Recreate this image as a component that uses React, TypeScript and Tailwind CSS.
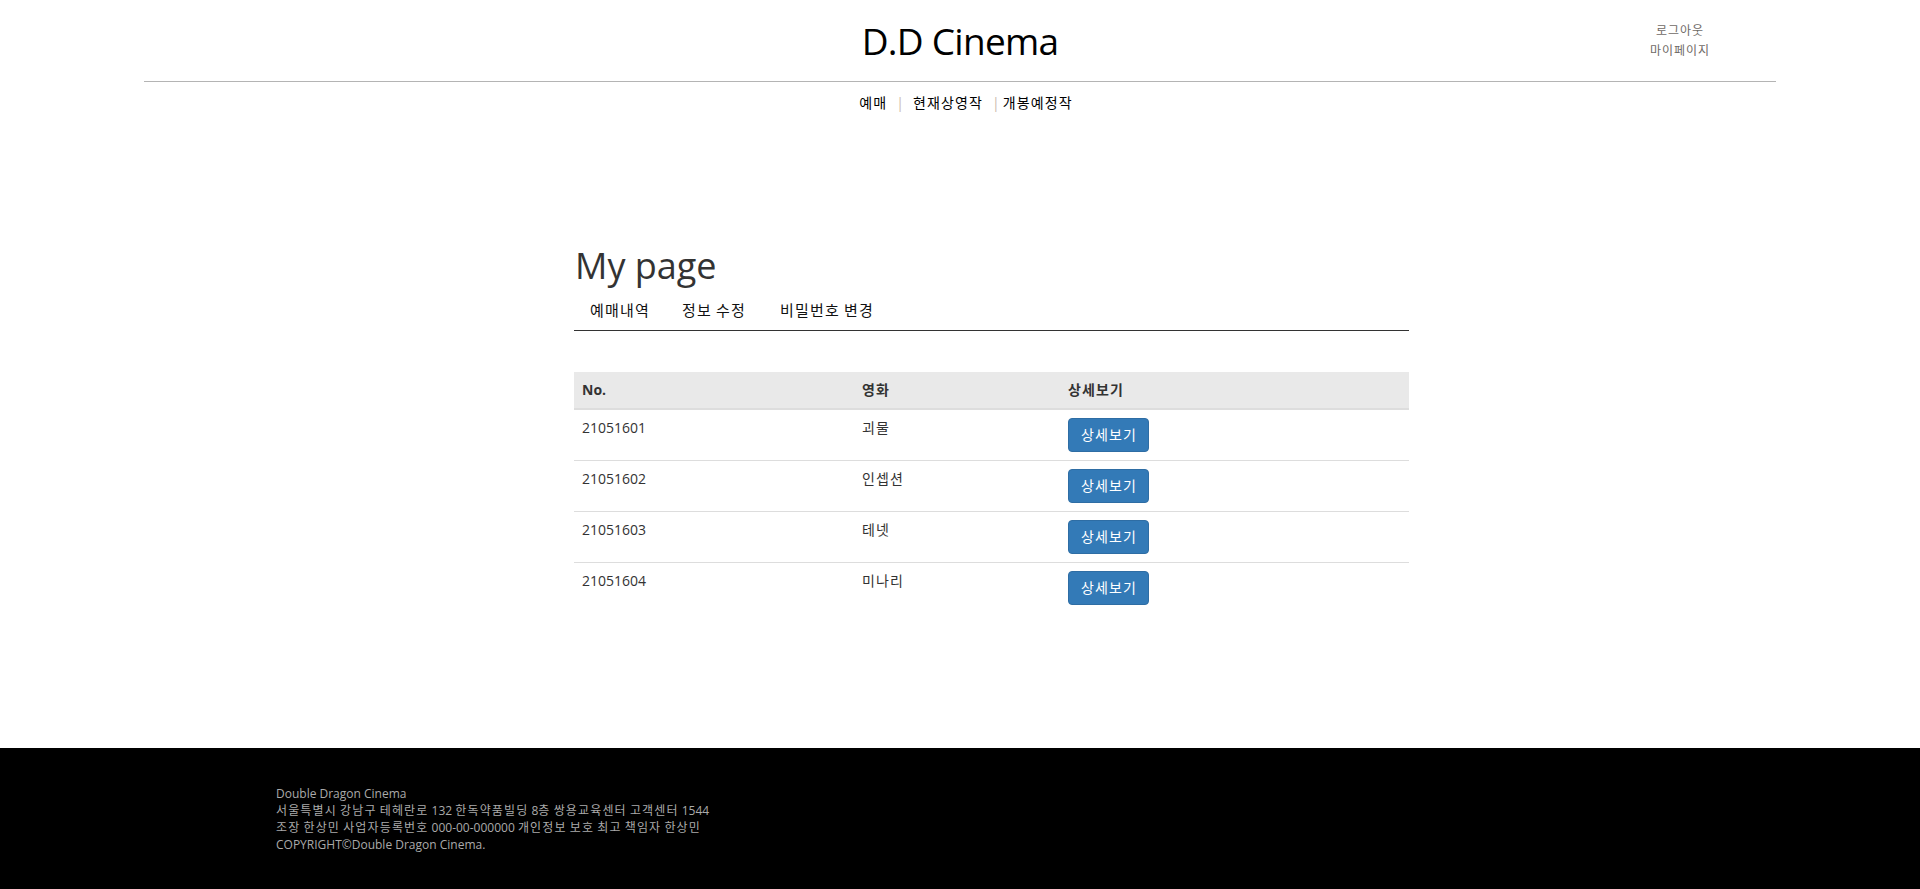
import React from "react";

const rows = [
  { no: "21051601", title: "괴물" },
  { no: "21051602", title: "인셉션" },
  { no: "21051603", title: "테넷" },
  { no: "21051604", title: "미나리" },
];

function K({ children, wide }: { children: string; wide?: boolean }) {
  const parts = children.split(/([\uAC00-\uD7A3]+)/);
  return (
    <>
      {parts.map((p, i) =>
        /[\uAC00-\uD7A3]/.test(p) ? (
          <span key={i} className={wide ? "tracking-[0.095em]" : "tracking-[0.08em]"}>
            {p}
          </span>
        ) : (
          <React.Fragment key={i}>{p}</React.Fragment>
        )
      )}
    </>
  );
}

export default function App() {
  return (
    <div
      className="min-h-screen flex flex-col bg-white text-[#333]"
      style={{ fontFamily: '"Open Sans", "Noto Sans CJK KR", sans-serif' }}
    >
      {/* Header */}
      <header className="grid grid-cols-[1fr_auto_1fr] h-[81px]">
        <div />
        <h1 className="text-[37px] leading-[44px] tracking-[-0.02em] text-black font-normal pt-[19px]">D.D Cinema</h1>
        <div className="flex justify-end pr-[210px] pt-[21px]">
          <div className="flex flex-col items-center text-[12px] leading-[20px] text-[#6f6a66]">
            <a><K>로그아웃</K></a>
            <a><K>마이페이지</K></a>
          </div>
        </div>
      </header>
      <div className="mx-auto w-[1632px] h-px bg-[#b4b4b4]" />
      <nav className="flex justify-center mt-[11px] text-[14px] leading-[20px] text-black pl-[12px]">
        <a><K>예매</K></a>
        <span className="ml-[9px] mr-[9px] text-[#cbbcae]">|</span>
        <a><K>현재상영작</K></a>
        <span className="ml-[9px] mr-[3px] text-[#cbbcae]">|</span>
        <a><K>개봉예정작</K></a>
      </nav>

      {/* Main */}
      <main className="ml-[574px] w-[835px] mt-[133px]">
        <h2 className="text-[36px] leading-[40px] font-normal text-[#333] pl-[1px]">My page</h2>
        <div className="flex mt-[4px] border-b border-[#333] text-[15px] leading-[20px] text-[#111]">
          <a className="py-[10px] pl-[16px] pr-[16px]"><K>예매내역</K></a>
          <a className="py-[10px] pl-[16px] pr-[17px]"><K>정보 수정</K></a>
          <a className="py-[10px] pl-[17px] pr-[15px]"><K>비밀번호 변경</K></a>
        </div>

        <table className="w-full table-fixed border-collapse mt-[41px] text-[14px] leading-[20px]">
          <colgroup>
            <col className="w-[280px]" />
            <col className="w-[206px]" />
            <col />
          </colgroup>
          <thead>
            <tr className="bg-[#e9e9e9]">
              <th className="text-left font-bold p-[8px] border-b-2 border-[#ddd]">No.</th>
              <th className="text-left font-bold p-[8px] border-b-2 border-[#ddd]"><K>영화</K></th>
              <th className="text-left font-bold p-[8px] border-b-2 border-[#ddd]"><K>상세보기</K></th>
            </tr>
          </thead>
          <tbody>
            {rows.map((r, i) => (
              <tr key={r.no}>
                <td className={i > 0 ? "align-top p-[8px] border-t border-[#ddd]" : "align-top p-[8px]"}>{r.no}</td>
                <td className={i > 0 ? "align-top p-[8px] border-t border-[#ddd]" : "align-top p-[8px]"}><K>{r.title}</K></td>
                <td className={i > 0 ? "align-top p-[8px] border-t border-[#ddd]" : "align-top p-[8px]"}>
                  <button className="bg-[#337ab7] border border-[#2e6da4] text-white rounded-[4px] pl-[12px] pr-[11px] py-[6px] text-[14px] leading-[20px]">
                    <K>상세보기</K>
                  </button>
                </td>
              </tr>
            ))}
          </tbody>
        </table>
      </main>

      <div className="flex-1" />

      {/* Footer */}
      <footer className="bg-black h-[141px] pl-[276px] pt-[37px] text-[12px] leading-[17px] text-[#aaa]">
        <p>Double Dragon Cinema</p>
        <p><K wide>서울특별시 강남구 테헤란로 132 한독약품빌딩 8층 쌍용교육센터 고객센터 1544</K></p>
        <p><K wide>조장 한상민 사업자등록번호 000-00-000000 개인정보 보호 최고 책임자 한상민</K></p>
        <p>COPYRIGHT©Double Dragon Cinema.</p>
      </footer>
    </div>
  );
}
